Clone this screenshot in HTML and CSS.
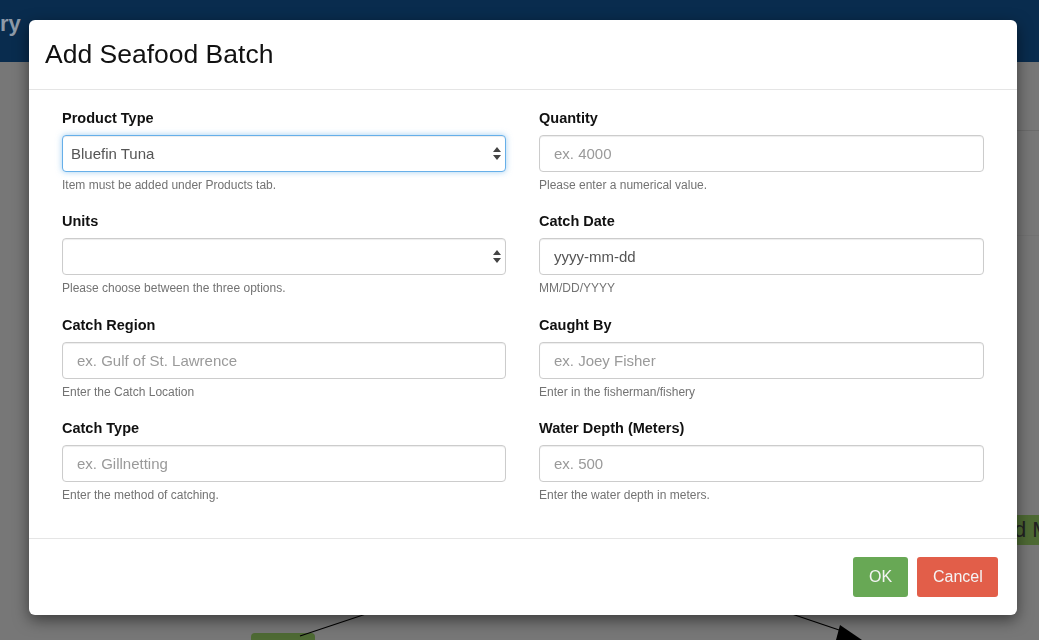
FILE: index.html
```html
<!DOCTYPE html>
<html lang="en">
<head>
<meta charset="utf-8">
<title>Add Seafood Batch</title>
<link rel="stylesheet" href="styles.css">
</head>
<body>
<div class="page">
  <header class="navbar"><span class="brand">ry</span></header>
  <div class="content">
    <div class="side-line line-a"></div>
    <div class="side-line line-b"></div>
    <div class="node node-bottom"></div>
    <div class="node node-right">d M</div>
    <svg class="edges" width="1039" height="640" viewBox="0 0 1039 640">
      <line x1="372" y1="612" x2="300" y2="636" stroke="#000" stroke-width="1.2"/>
      <line x1="780" y1="610" x2="845" y2="632" stroke="#000" stroke-width="1.2"/>
      <polygon points="840,625 862,640 836,640" fill="#000"/>
    </svg>
  </div>
</div>

<div class="modal">
  <div class="modal-header">
    <h4 class="modal-title">Add Seafood Batch</h4>
  </div>
  <form class="modal-body">
    <div class="field">
      <label>Product Type</label>
      <div class="select-wrap">
        <select class="control focus"><option>Bluefin Tuna</option></select>
        <svg class="arrows" width="8" height="13" viewBox="0 0 8 13"><path d="M4 0 L8 5 L0 5 Z M0 8 L8 8 L4 13 Z" fill="#444"/></svg>
      </div>
      <p class="help">Item must be added under Products tab.</p>
    </div>
    <div class="field">
      <label>Quantity</label>
      <input class="control" type="text" placeholder="ex. 4000">
      <p class="help">Please enter a numerical value.</p>
    </div>
    <div class="field">
      <label>Units</label>
      <div class="select-wrap">
        <select class="control"><option></option></select>
        <svg class="arrows" width="8" height="13" viewBox="0 0 8 13"><path d="M4 0 L8 5 L0 5 Z M0 8 L8 8 L4 13 Z" fill="#444"/></svg>
      </div>
      <p class="help">Please choose between the three options.</p>
    </div>
    <div class="field">
      <label>Catch Date</label>
      <input class="control date" type="text" value="yyyy-mm-dd">
      <p class="help">MM/DD/YYYY</p>
    </div>
    <div class="field">
      <label>Catch Region</label>
      <input class="control" type="text" placeholder="ex. Gulf of St. Lawrence">
      <p class="help">Enter the Catch Location</p>
    </div>
    <div class="field">
      <label>Caught By</label>
      <input class="control" type="text" placeholder="ex. Joey Fisher">
      <p class="help">Enter in the fisherman/fishery</p>
    </div>
    <div class="field">
      <label>Catch Type</label>
      <input class="control" type="text" placeholder="ex. Gillnetting">
      <p class="help">Enter the method of catching.</p>
    </div>
    <div class="field">
      <label>Water Depth (Meters)</label>
      <input class="control" type="text" placeholder="ex. 500">
      <p class="help">Enter the water depth in meters.</p>
    </div>
  </form>
  <div class="modal-footer">
    <button class="btn btn-ok" type="button">OK</button>
    <button class="btn btn-cancel" type="button">Cancel</button>
  </div>
</div>
</body>
</html>
```

FILE: styles.css
```css
* { box-sizing: border-box; }

html, body {
  margin: 0;
  padding: 0;
  width: 1039px;
  height: 640px;
  overflow: hidden;
  font-family: "Liberation Sans", Arial, Helvetica, sans-serif;
  background: #777777;
}

.page {
  display: flex;
  flex-direction: column;
  height: 640px;
}

.navbar {
  height: 62px;
  background: #092c4e;
  display: flex;
  align-items: center;
}

.brand {
  font-size: 22px;
  font-weight: bold;
  color: #8e9aa7;
  margin-left: 0;
  margin-top: -14px;
}

.content {
  position: relative;
  flex: 1;
  background: #777777;
}

.side-line {
  position: absolute;
  left: 1017px;
  right: 0;
  height: 1px;
  background: #6b6b6b;
}
.line-a { top: 68px; }
.line-b { top: 173px; background: #727272; }

.node {
  position: absolute;
  background: #4e6a34;
  border-radius: 4px;
}
.node-bottom {
  left: 251px;
  top: 571px;
  width: 64px;
  height: 20px;
}
.node-right {
  left: 1012px;
  top: 453px;
  width: 40px;
  height: 30px;
  border-radius: 0;
  color: #222;
  font-size: 22px;
  line-height: 30px;
  padding-left: 2px;
  white-space: nowrap;
  overflow: hidden;
}

.edges {
  position: absolute;
  left: 0;
  top: -62px;
}

.modal {
  position: fixed;
  left: 29px;
  top: 20px;
  width: 988px;
  background: #fff;
  border-radius: 6px;
  box-shadow: 0 5px 15px rgba(0, 0, 0, 0.5);
}

.modal-header {
  height: 70px;
  padding: 0 16px;
  display: flex;
  align-items: center;
  border-bottom: 1px solid #e5e5e5;
}

.modal-title {
  margin: 0;
  font-size: 26.5px;
  font-weight: normal;
  color: #111;
}

.modal-body {
  display: grid;
  grid-template-columns: 444px 445px;
  column-gap: 33px;
  padding: 18px 33px 16px 33px;
  margin: 0;
}

.field {
  margin-bottom: 17.4px;
}

.field label {
  display: block;
  font-size: 14.5px;
  font-weight: bold;
  color: #111;
  line-height: 20px;
  margin-bottom: 7px;
}

.control {
  display: block;
  width: 100%;
  height: 37px;
  border: 1px solid #cccccc;
  border-radius: 4px;
  background: #fff;
  font-family: "Liberation Sans", Arial, Helvetica, sans-serif;
  font-size: 15px;
  color: #555;
  padding: 0 14px;
  box-shadow: inset 0 1px 1px rgba(0, 0, 0, 0.075);
  outline: none;
}

.control::placeholder {
  color: #9a9a9a;
}

.control.date {
  color: #555;
}

.select-wrap {
  position: relative;
}

select.control {
  -webkit-appearance: none;
  appearance: none;
  padding-left: 8px;
}

.control.focus {
  border-color: #66afe9;
  box-shadow: inset 0 1px 1px rgba(0, 0, 0, 0.075), 0 0 6px rgba(102, 175, 233, 0.6);
}

.arrows {
  position: absolute;
  right: 5px;
  top: 12px;
}

.help {
  margin: 5px 0 0 0;
  font-size: 12px;
  line-height: 17px;
  color: #737373;
}

.modal-footer {
  border-top: 1px solid #e5e5e5;
  display: flex;
  justify-content: flex-end;
  gap: 9px;
  padding: 18px 19px 18px 0;
}

.btn {
  height: 40px;
  border: 0;
  border-radius: 3px;
  padding: 0 16px;
  font-family: "Liberation Sans", Arial, Helvetica, sans-serif;
  font-size: 16px;
  color: #f4f4f4;
}

.btn-ok {
  background: #68a855;
  width: 55px;
}

.btn-cancel {
  background: #e25e49;
  width: 81px;
}
```
